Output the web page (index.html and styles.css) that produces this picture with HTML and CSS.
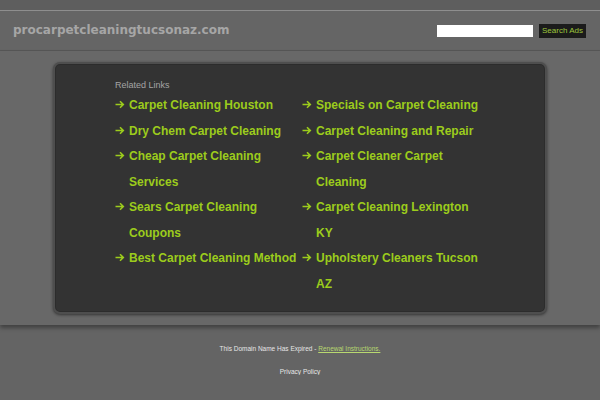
FILE: index.html
```html
<!DOCTYPE html>
<html>
<head>
<meta charset="utf-8">
<link rel="stylesheet" href="styles.css">
</head>
<body>
<div class="topstripe"></div>
<header class="header">
  <div class="domain">procarpetcleaningtucsonaz.com</div>
  <form class="search">
    <input class="search-input" type="text">
    <button class="search-btn" type="button">Search Ads</button>
  </form>
</header>
<main class="main">
  <div class="box">
    <div class="links">
      <div class="related">Related Links</div>
      <ul class="grid">
        <li><span class="arr"><svg viewBox="0 0 10 9" width="10" height="9"><path d="M0.5 4.5H8.3M5 1.2L8.3 4.5L5 7.8" fill="none" stroke="#9ccc1c" stroke-width="1.6"/></svg></span><a href="#">Carpet Cleaning Houston</a></li>
        <li><span class="arr"><svg viewBox="0 0 10 9" width="10" height="9"><path d="M0.5 4.5H8.3M5 1.2L8.3 4.5L5 7.8" fill="none" stroke="#9ccc1c" stroke-width="1.6"/></svg></span><a href="#">Specials on Carpet Cleaning</a></li>
        <li><span class="arr"><svg viewBox="0 0 10 9" width="10" height="9"><path d="M0.5 4.5H8.3M5 1.2L8.3 4.5L5 7.8" fill="none" stroke="#9ccc1c" stroke-width="1.6"/></svg></span><a href="#">Dry Chem Carpet Cleaning</a></li>
        <li><span class="arr"><svg viewBox="0 0 10 9" width="10" height="9"><path d="M0.5 4.5H8.3M5 1.2L8.3 4.5L5 7.8" fill="none" stroke="#9ccc1c" stroke-width="1.6"/></svg></span><a href="#">Carpet Cleaning and Repair</a></li>
        <li><span class="arr"><svg viewBox="0 0 10 9" width="10" height="9"><path d="M0.5 4.5H8.3M5 1.2L8.3 4.5L5 7.8" fill="none" stroke="#9ccc1c" stroke-width="1.6"/></svg></span><a href="#">Cheap Carpet Cleaning Services</a></li>
        <li><span class="arr"><svg viewBox="0 0 10 9" width="10" height="9"><path d="M0.5 4.5H8.3M5 1.2L8.3 4.5L5 7.8" fill="none" stroke="#9ccc1c" stroke-width="1.6"/></svg></span><a href="#">Carpet Cleaner Carpet Cleaning</a></li>
        <li><span class="arr"><svg viewBox="0 0 10 9" width="10" height="9"><path d="M0.5 4.5H8.3M5 1.2L8.3 4.5L5 7.8" fill="none" stroke="#9ccc1c" stroke-width="1.6"/></svg></span><a href="#">Sears Carpet Cleaning Coupons</a></li>
        <li><span class="arr"><svg viewBox="0 0 10 9" width="10" height="9"><path d="M0.5 4.5H8.3M5 1.2L8.3 4.5L5 7.8" fill="none" stroke="#9ccc1c" stroke-width="1.6"/></svg></span><a href="#">Carpet Cleaning Lexington KY</a></li>
        <li><span class="arr"><svg viewBox="0 0 10 9" width="10" height="9"><path d="M0.5 4.5H8.3M5 1.2L8.3 4.5L5 7.8" fill="none" stroke="#9ccc1c" stroke-width="1.6"/></svg></span><a href="#">Best Carpet Cleaning Method</a></li>
        <li><span class="arr"><svg viewBox="0 0 10 9" width="10" height="9"><path d="M0.5 4.5H8.3M5 1.2L8.3 4.5L5 7.8" fill="none" stroke="#9ccc1c" stroke-width="1.6"/></svg></span><a href="#">Upholstery Cleaners Tucson AZ</a></li>
      </ul>
    </div>
  </div>
</main>
<footer class="footer">
  <p class="expired">This Domain Name Has Expired - <a href="#" class="renew">Renewal Instructions.</a></p>
  <p class="privacy"><a href="#">Privacy Policy</a></p>
</footer>
</body>
</html>
```
FILE: styles.css
```css
html, body {
  margin: 0;
  padding: 0;
  background: #646464;
  font-family: "Liberation Sans", Arial, sans-serif;
}
.topstripe {
  height: 10px;
  background: #5e5e5e;
  border-bottom: 1px solid #8e8e8e;
}
.header {
  height: 39px;
  background: #656565;
  border-bottom: 1px solid #575757;
  display: flex;
  align-items: center;
  justify-content: space-between;
  padding: 0 14px 0 13px;
}
.domain {
  font-family: "DejaVu Sans", sans-serif;
  font-weight: bold;
  font-size: 12px;
  color: #a6a6a6;
  margin-top: -2px;
}
.search {
  display: flex;
  align-items: center;
  gap: 6px;
  margin: 0;
}
.search-input {
  width: 96px;
  height: 12px;
  box-sizing: border-box;
  border: none;
  padding: 0;
  background: #fff;
}
.search-btn {
  height: 14px;
  width: 47px;
  padding: 0;
  border: none;
  background: #1b1b1b;
  color: #9dc63c;
  font-family: "Liberation Sans", Arial, sans-serif;
  font-size: 8px;
}
.main {
  background: #686868;
  padding: 11px 53px 11px 53px;
  box-shadow: 0 3px 4px rgba(0,0,0,0.35);
  position: relative;
}
.box {
  background: #333333;
  border: 2px solid #4e4e4e;
  border-radius: 7px;
  box-shadow: 0 1px 3px rgba(0,0,0,0.5), inset 0 0 0 1px #2c2c2c;
  box-sizing: border-box;
  height: 252px;
  padding: 16px 0 0 60px;
}
.links {
  width: 374px;
}
.related {
  color: #a4a4a4;
  font-size: 9px;
  margin-bottom: 3px;
}
.grid {
  list-style: none;
  margin: 0;
  padding: 0;
  display: grid;
  grid-template-columns: 187px 180px;
}
.grid li {
  display: flex;
  font-weight: bold;
  font-size: 12px;
  line-height: 25.5px;
  color: #9ccc1c;
}
.arr {
  width: 14px;
  flex: none;
}
.arr svg {
  vertical-align: middle;
  position: relative;
  top: -1px;
}
.grid a {
  color: #9ccc1c;
  text-decoration: none;
}
.footer {
  text-align: center;
  padding-top: 20px;
  font-size: 6.5px;
  color: #e6e6e6;
}
.expired {
  margin: 0;
}
.renew {
  color: #b8d870;
  text-decoration: underline;
}
.privacy {
  margin: 16px 0 0 0;
}
.privacy a {
  color: #e6e6e6;
  text-decoration: underline;
}
```
